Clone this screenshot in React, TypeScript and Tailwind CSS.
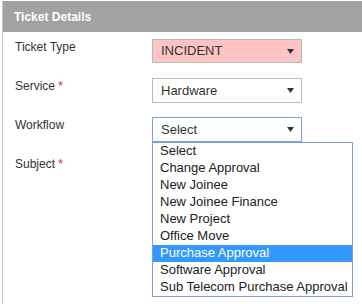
import React from 'react';

const workflowOptions = [
  'Select',
  'Change Approval',
  'New Joinee',
  'New Joinee Finance',
  'New Project',
  'Office Move',
  'Purchase Approval',
  'Software Approval',
  'Sub Telecom Purchase Approval',
];

function Arrow() {
  return (
    <svg width="7" height="5" viewBox="0 0 7 5" className="shrink-0">
      <path d="M0 0 H7 L3.5 5 Z" fill="#333" />
    </svg>
  );
}

interface FakeSelectProps {
  value: string;
  className: string;
}

function FakeSelect({ value, className }: FakeSelectProps) {
  return (
    <div className={`w-[150px] h-[24px] flex items-center justify-between pl-[8px] pr-[7px] text-[13px] text-[#333] ${className}`}>
      <span>{value}</span>
      <Arrow />
    </div>
  );
}

function Row({ label, required, children }: { label: string; required?: boolean; children?: React.ReactNode }) {
  return (
    <div className="flex h-[24px] mb-[15px]">
      <div className="w-[137px] text-[12px] leading-4 text-[#333]">
        {label}
        {required && <span className="text-[#d9201f]"> *</span>}
      </div>
      {children}
    </div>
  );
}

export default function App() {
  return (
    <div className="w-[362px] h-[304px] bg-white overflow-hidden pt-[1px] pl-[2px]" style={{ fontFamily: '"Liberation Sans", Arial, sans-serif' }}>
      <div className="h-full border-l border-[#c4c4c4]">
        <div className="h-[31px] bg-[#a2a2a2] flex items-center pl-[11px] text-[12px] font-bold text-white">
          Ticket Details
        </div>

        <div className="relative pt-[7px] pl-[12px]">
          <Row label="Ticket Type">
            <FakeSelect value="INCIDENT" className="bg-[#ffc4c4] border border-[#b9b9b9]" />
          </Row>
          <Row label="Service" required>
            <FakeSelect value="Hardware" className="bg-white border border-[#b9b9b9] h-[25px]" />
          </Row>
          <Row label="Workflow">
            <FakeSelect value="Select" className="bg-white border border-[#7ba2de] h-[25px]" />
          </Row>
          <Row label="Subject" required />

          {/* open dropdown list */}
          <div className="absolute left-[149px] top-[110px] w-[201px] border border-[#7f9fd4] bg-white">
            {workflowOptions.map((opt) => (
              <div
                key={opt}
                className={`h-[17px] leading-[16px] pl-[7px] text-[13px] whitespace-nowrap ${
                  opt === 'Purchase Approval' ? 'bg-[#3399ff] text-white' : 'text-[#222]'
                }`}
              >
                {opt}
              </div>
            ))}
          </div>
        </div>
      </div>
    </div>
  );
}
